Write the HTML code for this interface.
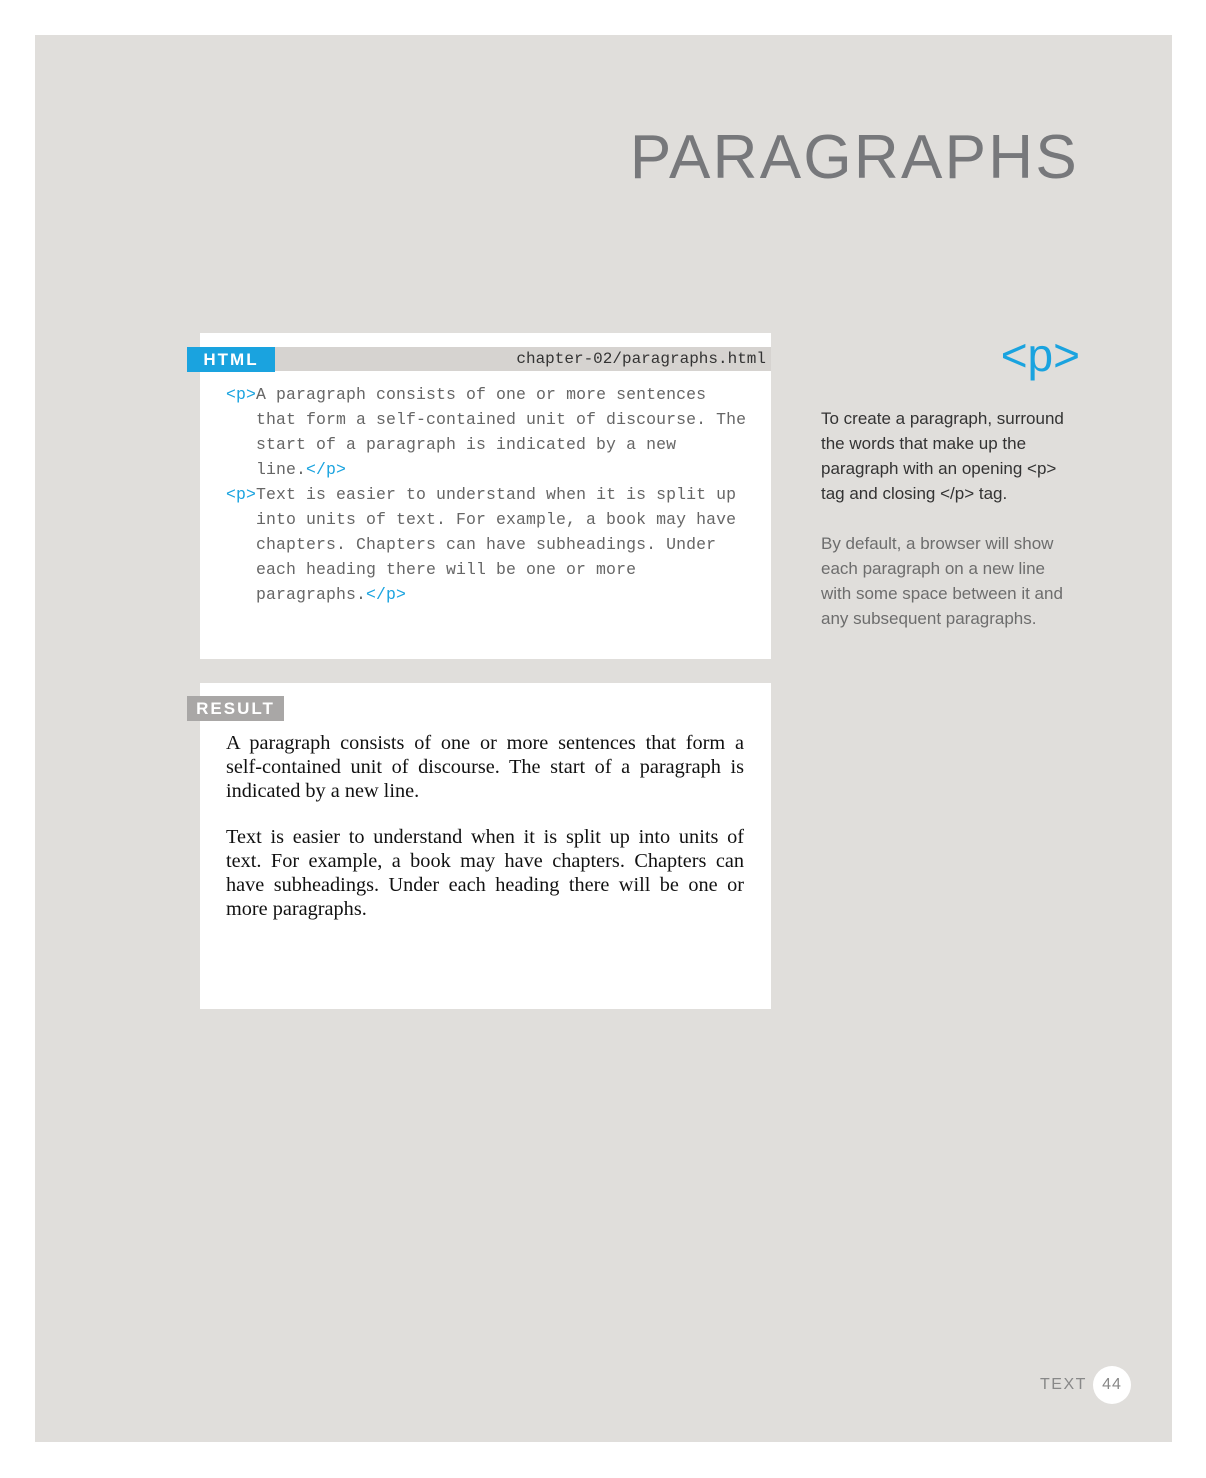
<!DOCTYPE html>
<html><head><meta charset="utf-8"><style>
body{margin:0;width:1206px;height:1478px;background:#fff;position:relative;font-family:"Liberation Sans",sans-serif;overflow:hidden}
.pg{position:absolute;left:35px;top:35px;width:1137px;height:1407px;background:#e0dedb}
.a{position:absolute}
.title{right:127px;top:120px;font-size:62px;color:#77787b;letter-spacing:2.3px;line-height:76px}
.box{background:#fff;left:200px;width:571px;height:326px}
.bar{left:200px;top:347px;width:571px;height:24px;background:#d6d3d0}
.tag{color:#fff;font-weight:bold;font-size:17px;letter-spacing:2px;line-height:25px;text-align:center}
.code{left:226px;top:382px;font-family:"Liberation Mono",monospace;font-size:16.5px;line-height:25px;color:#666;white-space:pre;letter-spacing:0.1px}
.b{color:#1aa3df}
.res{left:226px;top:731px;width:518px;font-family:"Liberation Serif",serif;font-size:20.3px;line-height:24px;color:#111}
.res div{text-align:justify;text-align-last:justify;white-space:nowrap;height:24px}
.res div.l{text-align-last:left}
.side{left:821px;width:270px;font-size:17px;line-height:25px;white-space:nowrap}
</style></head><body>
<div class="pg"></div>
<div class="a title">PARAGRAPHS</div>
<div class="a box" style="top:333px"></div>
<div class="a bar"></div>
<div class="a tag" style="left:187px;top:347px;width:88px;background:#1aa3df">HTML</div>
<div class="a" style="left:500px;top:348px;width:266px;text-align:right;font-family:'Liberation Mono',monospace;font-size:16px;line-height:23px;color:#333">chapter-02/paragraphs.html</div>
<div class="a code"><span class="b">&lt;p&gt;</span>A paragraph consists of one or more sentences
   that form a self-contained unit of discourse. The
   start of a paragraph is indicated by a new
   line.<span class="b">&lt;/p&gt;</span>
<span class="b">&lt;p&gt;</span>Text is easier to understand when it is split up
   into units of text. For example, a book may have
   chapters. Chapters can have subheadings. Under
   each heading there will be one or more
   paragraphs.<span class="b">&lt;/p&gt;</span></div>
<div class="a box" style="top:683px"></div>
<div class="a tag" style="left:187px;top:696px;width:97px;background:#a9a7a6">RESULT</div>
<div class="a res">
<div>A paragraph consists of one or more sentences that form a</div>
<div>self-contained unit of discourse. The start of a paragraph is</div>
<div class="l">indicated by a new line.</div>
<div style="height:22px"></div>
<div>Text is easier to understand when it is split up into units of</div>
<div>text. For example, a book may have chapters. Chapters can</div>
<div>have subheadings. Under each heading there will be one or</div>
<div class="l">more paragraphs.</div>
</div>
<div class="a" style="left:995px;top:325px;width:85px;text-align:right;font-size:46px;color:#1aa3df;line-height:60px">&lt;p&gt;</div>
<div class="a side" style="top:406px;color:#333">To create a paragraph, surround<br>the words that make up the<br>paragraph with an opening &lt;p&gt;<br>tag and closing &lt;/p&gt; tag.</div>
<div class="a side" style="top:531px;color:#6d6d6d">By default, a browser will show<br>each paragraph on a new line<br>with some space between it and<br>any subsequent paragraphs.</div>
<div class="a" style="left:1040px;top:1376px;font-size:16px;color:#888;letter-spacing:1.5px">TEXT</div>
<div class="a" style="left:1093px;top:1366px;width:38px;height:38px;border-radius:50%;background:#fff;color:#888;font-size:16px;line-height:38px;text-align:center;letter-spacing:1px">44</div>
</body></html>
